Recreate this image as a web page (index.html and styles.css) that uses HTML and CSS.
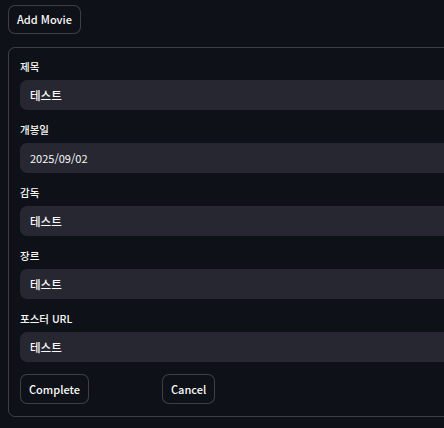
FILE: index.html
```html
<!DOCTYPE html>
<html lang="ko">
<head>
<meta charset="utf-8">
<link rel="stylesheet" href="styles.css">
</head>
<body>
  <div class="page">
    <button class="btn add-btn">Add Movie</button>
    <form class="movie-form">
      <div class="field">
        <label class="label">제목</label>
        <div class="input">테스트</div>
      </div>
      <div class="field">
        <label class="label">개봉일</label>
        <div class="input date">2025/09/02</div>
      </div>
      <div class="field">
        <label class="label">감독</label>
        <div class="input">테스트</div>
      </div>
      <div class="field">
        <label class="label">장르</label>
        <div class="input">테스트</div>
      </div>
      <div class="field">
        <label class="label">포스터 URL</label>
        <div class="input">테스트</div>
      </div>
      <div class="actions">
        <div class="col"><button type="button" class="btn">Complete</button></div>
        <div class="col"><button type="button" class="btn">Cancel</button></div>
      </div>
    </form>
  </div>
</body>
</html>
```
FILE: styles.css
```css
html, body {
  margin: 0;
  padding: 0;
  background: #0e1117;
  overflow: hidden;
}
body {
  font-family: "Noto Sans CJK KR", "Noto Sans", sans-serif;
  color: #fafafa;
}
.page {
  padding: 5px 8px 0 8px;
  display: flex;
  flex-direction: column;
  align-items: flex-start;
  gap: 13px;
}
.btn {
  font-family: "Noto Sans CJK KR", "Noto Sans", sans-serif;
  font-size: 11px;
  font-weight: 500;
  color: #fafafa;
  background: #0e1117;
  border: 1px solid rgba(250, 250, 250, 0.2);
  border-radius: 7px;
  height: 30px;
  padding: 0 8px;
  line-height: 28px;
  cursor: pointer;
}
.add-btn {
  height: 29px;
  line-height: 27px;
}
.movie-form {
  width: 720px;
  box-sizing: border-box;
  border: 1px solid rgba(250, 250, 250, 0.2);
  border-radius: 7px;
  padding: 11px 12px 12px 11px;
  display: flex;
  flex-direction: column;
  gap: 12px;
}
.field {
  display: flex;
  flex-direction: column;
}
.label {
  font-size: 10.5px;
  font-weight: 500;
  line-height: 16px;
  height: 16px;
  margin-bottom: 5px;
  color: #fafafa;
}
.input {
  height: 30px;
  background: #262730;
  border-radius: 7px;
  padding: 0 10px;
  font-size: 11.5px;
  font-weight: 500;
  line-height: 30px;
  color: #fafafa;
}
.input.date {
  font-weight: 400;
  font-size: 11px;
}
.actions {
  display: grid;
  grid-template-columns: 142px 142px;
  align-items: start;
}
```
